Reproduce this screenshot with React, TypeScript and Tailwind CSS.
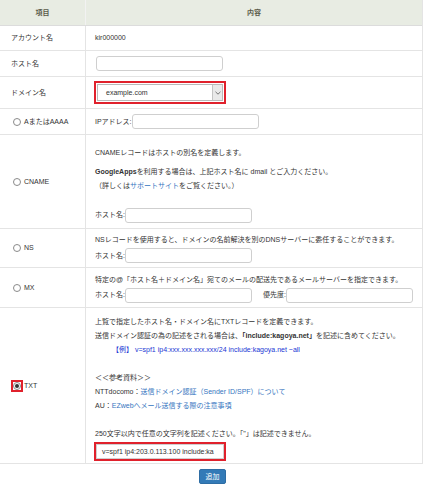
import React from "react";

function Radio({ checked = false }: { checked?: boolean }) {
  return (
    <span className="flex h-[8px] w-[8px] shrink-0 items-center justify-center rounded-full border border-[#8a8a8a] bg-white">
      {checked && <span className="h-[4px] w-[4px] rounded-full bg-[#333]" />}
    </span>
  );
}

function Field() {
  return <span className="block h-[15px] w-[127px] shrink-0 rounded-[3px] border border-[#cfcfcf] bg-white" />;
}

function Row({
  label,
  children,
  className = "",
}: {
  label: React.ReactNode;
  children: React.ReactNode;
  className?: string;
}) {
  return (
    <div className={`flex border-b border-[#e4e4e4] ${className}`}>
      <div className="flex w-[86px] shrink-0 items-center border-r border-[#e4e4e4] pl-[11px]">{label}</div>
      <div className="flex min-w-0 flex-1 flex-col justify-center pl-[9px]">{children}</div>
    </div>
  );
}

function RadioLabel({ text }: { text: string }) {
  return (
    <span className="flex items-center gap-[3px] pl-[2px]">
      <Radio />
      {text}
    </span>
  );
}

export default function App() {
  return (
    <div className="min-h-[493px] w-[425px] bg-white font-['Liberation_Sans','Noto_Sans_CJK_JP',sans-serif] text-[7px] leading-[14px] text-[#333]">
      <div className="w-[423px] border-r border-[#e4e4e4]">
        {/* header */}
        <div className="flex h-[26px] border-b border-[#dcdcdc] bg-[#e8ece3] font-bold text-[#5a5a4a]">
          <div className="flex w-[86px] items-center justify-center border-r border-[#f2f2f2]">項目</div>
          <div className="flex flex-1 items-center justify-center">内容</div>
        </div>

        <Row label="アカウント名" className="h-[25px]">
          <span>kir000000</span>
        </Row>

        <Row label="ホスト名" className="h-[26px]">
          <span className="pl-[1px]"><Field /></span>
        </Row>

        <Row label="ドメイン名" className="h-[32px]">
          <span className="ml-[-1px] block w-[132px] border-2 border-[#e0212c] p-px">
            <span className="flex h-[17px] items-center justify-between border border-[#b9b9b9] bg-white pl-[8px]">
              <span>example.com</span>
              <span className="flex h-full w-[10px] items-center justify-center border-l border-[#c4c4c4] bg-[#e9e9e9]">
                <svg width="6" height="4" viewBox="0 0 6 4">
                  <path d="M0.5 0.8 L3 3.2 L5.5 0.8" fill="none" stroke="#666" strokeWidth="0.9" />
                </svg>
              </span>
            </span>
          </span>
        </Row>

        <Row label={<RadioLabel text="AまたはAAAA" />} className="h-[26px]">
          <span className="flex items-center whitespace-nowrap">
            IPアドレス:
            <Field />
          </span>
        </Row>

        <Row label={<RadioLabel text="CNAME" />} className="h-[94px]">
          <div className="flex flex-col pb-[5px] pt-[10px]">
            <p>CNAMEレコードはホストの別名を定義します。</p>
            <p className="mt-[5px]">
              <b>GoogleApps</b>を利用する場合は、上記ホスト名に dmail とご入力ください。
            </p>
            <p>
              （詳しくは<span className="text-[#3575c0]">サポートサイト</span>をご覧ください。）
            </p>
            <span className="mt-[15px] flex items-center whitespace-nowrap">
              ホスト名:
              <Field />
            </span>
          </div>
        </Row>

        <Row label={<RadioLabel text="NS" />} className="h-[39px]">
          <p className="whitespace-nowrap">NSレコードを使用すると、ドメインの名前解決を別のDNSサーバーに委任することができます。</p>
          <span className="mt-px flex items-center whitespace-nowrap">
            ホスト名:
            <Field />
          </span>
        </Row>

        <Row label={<RadioLabel text="MX" />} className="h-[40px]">
          <p className="whitespace-nowrap">特定の@「ホスト名＋ドメイン名」宛てのメールの配送先であるメールサーバーを指定できます。</p>
          <span className="mt-px flex items-center whitespace-nowrap">
            ホスト名:
            <Field />
            <span className="ml-[11px]">優先度:</span>
            <Field />
          </span>
        </Row>

        <Row
          label={
            <span className="flex items-center gap-[1px]">
              <span className="flex h-[12px] w-[12px] items-center justify-center border-2 border-[#e0212c]">
                <Radio checked />
              </span>
              TXT
            </span>
          }
          className="h-[156px]"
        >
          <div className="flex flex-col pb-[2px] pt-[6px]">
            <p>上覧で指定したホスト名・ドメイン名にTXTレコードを定義できます。</p>
            <p className="whitespace-nowrap">
              送信ドメイン認証の為の記述をされる場合は、<b>「include:kagoya.net」</b>を記述に含めてください。
            </p>
            <p className="pl-[17px] text-[#2136d4]">【例】 v=spf1 ip4:xxx.xxx.xxx.xxx/24 include:kagoya.net ~all</p>
            <p>&nbsp;</p>
            <p>＜＜参考資料＞＞</p>
            <p>
              NTTdocomo：<span className="text-[#3575c0]">送信ドメイン認証（Sender ID/SPF）について</span>
            </p>
            <p>
              AU：<span className="text-[#3575c0]">EZwebへメール送信する際の注意事項</span>
            </p>
            <p>&nbsp;</p>
            <p>250文字以内で任意の文字列を記述ください。「"」は記述できません。</p>
            <span className="ml-[-1px] mt-px block w-[132px] border-2 border-[#e0212c]">
              <span className="flex h-[15px] items-center whitespace-nowrap border border-[#cfcfcf] bg-white pl-[5px] leading-none">
                v=spf1 ip4:203.0.113.100 include:ka
              </span>
            </span>
          </div>
        </Row>
      </div>

      <div className="flex justify-center pt-[5px]">
        <button className="flex h-[15px] w-[27px] items-center justify-center rounded-[2px] border border-[#2e6da4] bg-[#337ab7] text-[7px] leading-none text-white">
          追加
        </button>
      </div>
    </div>
  );
}
